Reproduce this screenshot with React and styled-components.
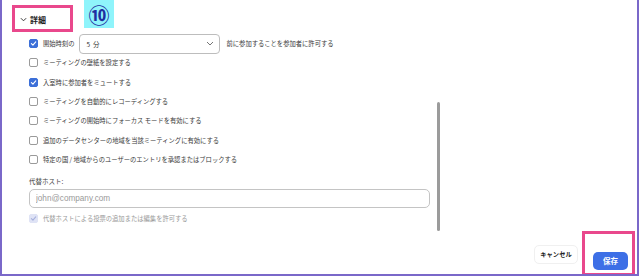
import styled, { createGlobalStyle } from 'styled-components'

const GlobalStyle = createGlobalStyle`
  html, body {
    margin: 0;
    padding: 0;
    background: #fff;
  }
  body {
    font-family: "Noto Sans CJK JP", "Noto Sans", sans-serif;
    color: #333;
  }
`

const options = [
  { label: 'ミーティングの壁紙を設定する', checked: false },
  { label: '入室時に参加者をミュートする', checked: true },
  { label: 'ミーティングを自動的にレコーディングする', checked: false },
  { label: 'ミーティングの開始時にフォーカス モードを有効にする', checked: false },
  { label: '追加のデータセンターの地域を当該ミーティングに有効にする', checked: false },
  { label: '特定の国 / 地域からのユーザーのエントリを承認またはブロックする', checked: false },
]

const Check = ({ checked, disabled }) => (
  <Box $checked={checked} $disabled={disabled}>
    {checked && (
      <svg width="7" height="7" viewBox="0 0 10 10">
        <path
          d="M2 5.2 L4.2 7.3 L8.2 2.8"
          fill="none"
          stroke={disabled ? '#a7b1dd' : '#fff'}
          strokeWidth="1.6"
          strokeLinecap="round"
          strokeLinejoin="round"
        />
      </svg>
    )}
  </Box>
)

const App = () => {
  return (
    <>
      <GlobalStyle />
      <Frame>
        <Header>
          <Mark>
            <svg width="7" height="5" viewBox="0 0 8 5">
              <path d="M1 1 L4 4 L7 1" fill="none" stroke="#333" strokeWidth="1.1" />
            </svg>
            <Title>詳細</Title>
          </Mark>
          <Badge>⑩</Badge>
        </Header>
        <Body>
          <Options>
            <Row>
              <Check checked />
              <Label>開始時刻の</Label>
              <Select>
                <span>5&nbsp;&nbsp;分</span>
                <svg width="8" height="5" viewBox="0 0 8 5">
                  <path d="M1 1 L4 4 L7 1" fill="none" stroke="#666" strokeWidth="0.9" />
                </svg>
              </Select>
              <Label>前に参加することを参加者に許可する</Label>
            </Row>
            {options.map((o) => (
              <Row key={o.label}>
                <Check checked={o.checked} />
                <Label>{o.label}</Label>
              </Row>
            ))}
            <FieldLabel>代替ホスト:</FieldLabel>
            <Input placeholder="john@company.com" />
            <Row $short>
              <Check checked disabled />
              <Label $muted>代替ホストによる投票の追加または編集を許可する</Label>
            </Row>
          </Options>
          <Scrollbar />
        </Body>
        <Footer>
          <CancelBtn>キャンセル</CancelBtn>
          <SaveMark>
            <SaveBtn>保存</SaveBtn>
          </SaveMark>
        </Footer>
      </Frame>
    </>
  )
}

const Frame = styled.div`
  box-sizing: border-box;
  width: 639px;
  height: 276px;
  border: 2px solid #7a68c9;
  border-top: none;
  display: flex;
  flex-direction: column;
  overflow: hidden;
`

const Header = styled.div`
  display: flex;
  align-items: flex-start;
  height: 32px;
  padding-left: 10px;
`

const Mark = styled.div`
  box-sizing: border-box;
  margin-top: 5px;
  width: 61px;
  height: 27px;
  border: 3px solid #e9488c;
  display: flex;
  align-items: center;
  gap: 3px;
  padding-left: 5px;
  padding-top: 2px;
`

const Title = styled.span`
  font-size: 8px;
  font-weight: 700;
  color: #222;
`

const Badge = styled.div`
  margin-left: 11px;
  width: 30px;
  height: 28px;
  background: #8ff4fb;
  display: flex;
  align-items: center;
  justify-content: center;
  font-family: "Noto Sans CJK JP", sans-serif;
  font-size: 21px;
  font-weight: 700;
  line-height: 28px;
  color: #1f2fa0;
`

const Body = styled.div`
  display: flex;
  height: 200px;
`

const Options = styled.div`
  width: 401px;
  padding: 2px 0 0 27px;
  display: flex;
  flex-direction: column;
`

const Row = styled.div`
  display: flex;
  align-items: center;
  height: ${(p) => (p.$short ? '20px' : '19.3px')};
  gap: 5px;
  white-space: nowrap;
`

const Box = styled.span`
  box-sizing: border-box;
  flex: none;
  width: 9px;
  height: 9px;
  border-radius: 2px;
  display: flex;
  align-items: center;
  justify-content: center;
  border: 1px solid
    ${(p) => (p.$disabled ? '#dfe3f5' : p.$checked ? '#3c6fd8' : '#9a9a9a')};
  background: ${(p) => (p.$disabled ? '#dfe3f5' : p.$checked ? '#3c6fd8' : '#fff')};
`

const Label = styled.span`
  font-size: 6.3px;
  color: ${(p) => (p.$muted ? '#999' : '#3a3a3a')};
`

const Select = styled.div`
  box-sizing: border-box;
  width: 141px;
  height: 20px;
  border: 1px solid #bdbdbd;
  border-radius: 4px;
  display: flex;
  align-items: center;
  justify-content: space-between;
  padding: 0 5px 0 6px;
  margin-right: 1px;
  font-size: 6.5px;
  color: #333;
`

const FieldLabel = styled.div`
  margin-top: 7px;
  font-size: 6.5px;
  color: #444;
  height: 11px;
  line-height: 11px;
`

const Input = styled.input`
  box-sizing: border-box;
  margin-top: 2px;
  width: 401px;
  height: 19px;
  border: 1px solid #c4c4c4;
  border-radius: 5px;
  padding: 0 6px;
  font-family: "Liberation Sans", Arial, sans-serif;
  font-size: 8.2px;
  outline: none;
  &::placeholder {
    color: #9a9a9a;
  }
`

const Scrollbar = styled.div`
  margin: 70px 0 0 7px;
  width: 3px;
  height: 129px;
  border-radius: 2px;
  background: #9b9b9b;
`

const Footer = styled.div`
  flex: 1;
  display: flex;
  justify-content: flex-end;
  align-items: flex-start;
  gap: 4px;
  padding-right: 2px;
`

const CancelBtn = styled.button`
  margin-top: 14px;
  box-sizing: border-box;
  width: 44px;
  height: 19px;
  border: 1px solid #f0f0f0;
  border-radius: 5px;
  background: #fff;
  font-family: "Noto Sans CJK JP", sans-serif;
  font-size: 6.3px;
  font-weight: 700;
  color: #222;
  padding: 0;
`

const SaveMark = styled.div`
  box-sizing: border-box;
  width: 53px;
  height: 44px;
  border: 3px solid #e9488c;
  border-bottom-width: 2px;
  padding: 11px 3px 0 8px;
`

const SaveBtn = styled.button`
  box-sizing: border-box;
  width: 35px;
  height: 18px;
  border: none;
  border-radius: 5px;
  background: #3d6fe6;
  color: #fff;
  font-family: "Noto Sans CJK JP", sans-serif;
  font-size: 7.5px;
  font-weight: 700;
  padding: 0;
`

export default App
